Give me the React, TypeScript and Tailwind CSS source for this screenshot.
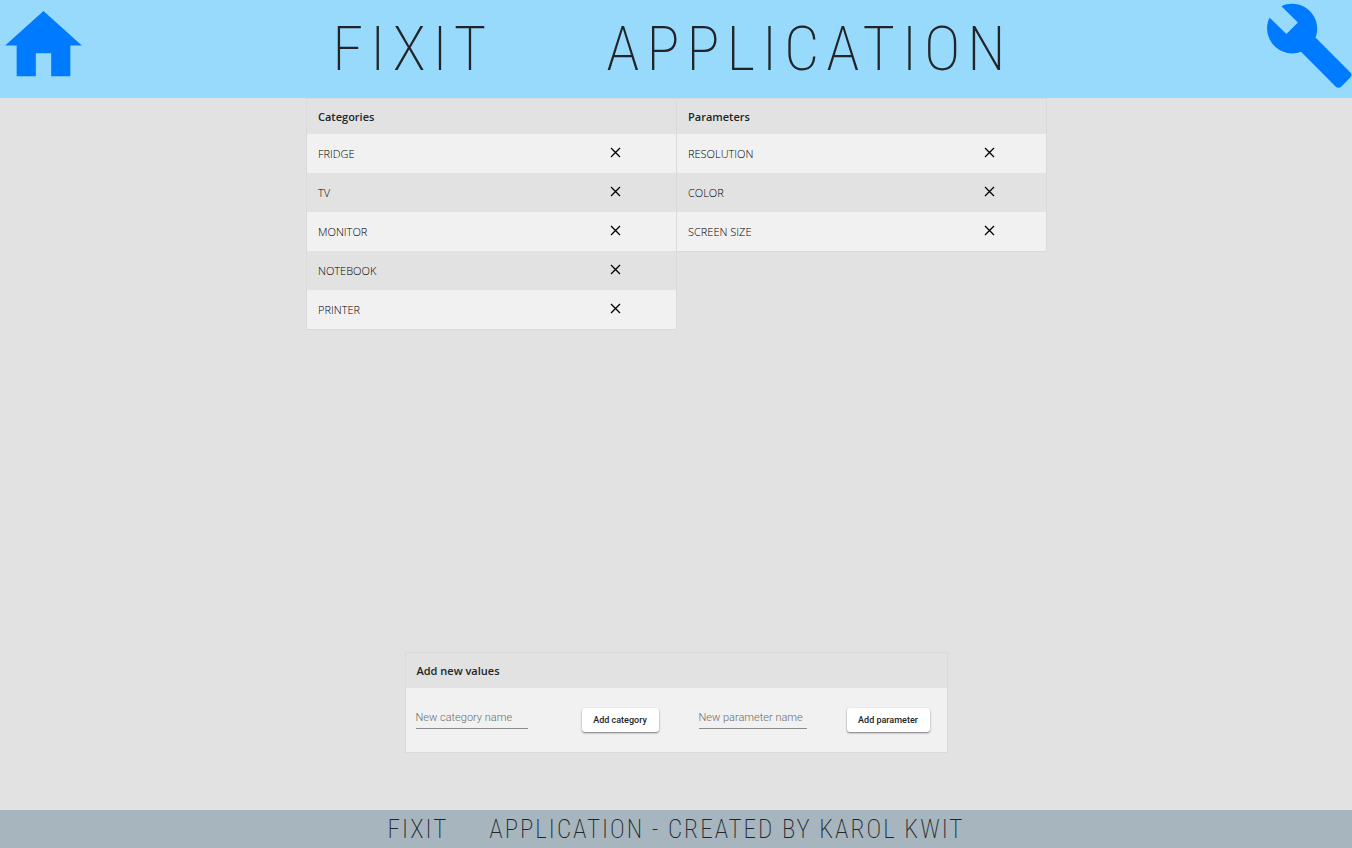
type ListProps = { title: string; items: string[]; nameWidth: string };

function CloseIcon() {
  return (
    <svg viewBox="0 0 11 11" className="size-[11px]" fill="none" stroke="currentColor" strokeWidth="1.3" aria-hidden="true">
      <path d="M1 1l9 9M10 1l-9 9" />
    </svg>
  );
}

function ValueTable({ title, items, nameWidth }: ListProps) {
  return (
    <table className="-mr-px w-[371px] border-separate border-spacing-0 border border-[#dadada] text-left text-[11px] leading-4">
      <thead>
        <tr className="h-[35px]">
          <th colSpan={2} className="px-[11px] font-semibold">{title}</th>
        </tr>
      </thead>
      <tbody>
        {items.map((item) => (
          <tr key={item} className="h-[39px] odd:bg-[#f1f1f1]">
            <td className={`${nameWidth} px-[11px] font-light text-black`}>{item}</td>
            <td>
              <button type="button" aria-label={`Remove ${item}`} className="mb-[2px] block text-black">
                <CloseIcon />
              </button>
            </td>
          </tr>
        ))}
      </tbody>
    </table>
  );
}

const inputClass =
  "mb-[6px] h-[23px] border-b border-[#8c8c8c] bg-transparent pt-[2px] font-[Roboto,sans-serif] text-[11px] font-light text-black outline-none placeholder:text-[#6c6c6c]";
const buttonClass =
  "h-6 rounded-[3px] bg-white pt-px font-[Roboto,sans-serif] text-[9px] font-medium shadow-[0_1px_2px_rgba(0,0,0,0.5)]";

export default function App() {
  return (
    <div className="flex min-h-screen flex-col bg-[#e2e2e2] font-['Open_Sans',sans-serif] text-[#212529]">
      <header className="flex h-[98px] items-start justify-between bg-[#98dafc]">
        <a href="#home" aria-label="Home" className="text-[#007bff]">
          <svg viewBox="0.7 0.1 22.6 24" className="h-[92px] w-[87px]" fill="currentColor">
            <path d="M10 20v-6h4v6h5v-8h3L12 3 2 12h3v8z" />
          </svg>
        </a>
        <h1 className="flex gap-[113px] self-center pr-2 font-['Roboto_Condensed',Roboto,sans-serif] text-[62px] leading-none font-extralight tracking-[7px]">
          <span>FIXIT</span>
          <span>APPLICATION</span>
        </h1>
        <a href="#settings" aria-label="Settings" className="text-[#007bff]">
          <svg viewBox="0.7 0.1 22.4 24" className="h-[92px] w-[86px]" fill="currentColor">
            <path d="M22.7 19l-9.1-9.1c.9-2.3.4-5-1.5-6.9-2-2-5-2.4-7.4-1.3L9 6 6 9 1.6 4.7C.4 7.1.9 10.1 2.9 12.1c1.9 1.9 4.6 2.4 6.9 1.5l9.1 9.1c.4.4 1 .4 1.4 0l2.3-2.3c.5-.4.5-1.1.1-1.4z" />
          </svg>
        </a>
      </header>

      <main className="flex flex-1 flex-col items-center justify-between pb-[57px]">
        <div className="flex items-start justify-center">
          <ValueTable title="Categories" items={["FRIDGE", "TV", "MONITOR", "NOTEBOOK", "PRINTER"]} nameWidth="w-[303px]" />
          <ValueTable title="Parameters" items={["RESOLUTION", "COLOR", "SCREEN SIZE"]} nameWidth="w-[307px]" />
        </div>

        <section className="w-[543px] border border-[#dadada]">
          <h2 className="flex h-[35px] items-center px-[11px] pt-px text-[11px] font-semibold">Add new values</h2>
          <form className="flex h-16 items-center bg-[#f1f1f1] px-[10px]" onSubmit={(e) => e.preventDefault()}>
            <input aria-label="New category name" placeholder="New category name" className={`${inputClass} mr-[54px] w-28`} />
            <button type="button" className={`${buttonClass} mr-10 w-[77px]`}>Add category</button>
            <input aria-label="New parameter name" placeholder="New parameter name" className={`${inputClass} mr-10 w-[108px]`} />
            <button type="button" className={`${buttonClass} w-[83px]`}>Add parameter</button>
          </form>
        </section>
      </main>

      <footer className="flex h-[38px] items-center justify-center gap-[41px] bg-[#a7b5be] font-['Roboto_Condensed',Roboto,sans-serif] text-[25px] leading-none font-extralight tracking-[2px]">
        <span>FIXIT</span>
        <span>APPLICATION - CREATED BY KAROL KWIT</span>
      </footer>
    </div>
  );
}
